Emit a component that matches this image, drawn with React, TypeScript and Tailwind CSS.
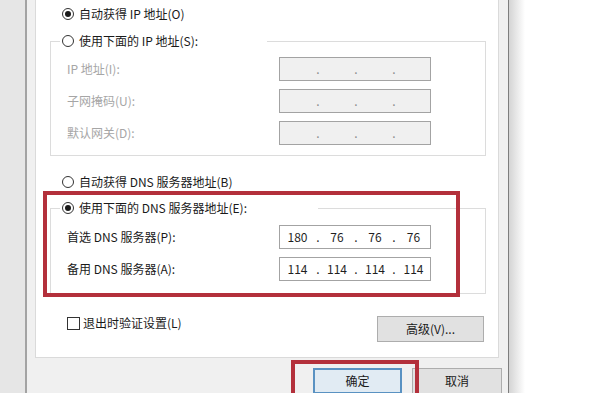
import React from "react";

const FONT = { fontFamily: '"Noto Sans CJK SC", "Noto Sans", sans-serif' };

function Radio({ checked }: { checked?: boolean }) {
  return (
    <span className="w-[12px] h-[12px] rounded-full border border-[#333333] bg-white flex items-center justify-center shrink-0">
      {checked ? <span className="w-[6px] h-[6px] rounded-full bg-[#1a1a1a]" /> : null}
    </span>
  );
}

function IpField({ values, disabled }: { values?: string[]; disabled?: boolean }) {
  const v = values ?? ["", "", "", ""];
  const box = disabled
    ? "bg-[#f0f0f0] border-[#a3a3a3]"
    : "bg-white border-[#a3a3a3]";
  const txt = disabled ? "text-[#8c8c8c]" : "text-[#1f1f1f]";
  return (
    <div className={`w-[152px] h-[24px] border ${box} flex items-center text-[12px] leading-none ${txt}`}>
      <span className="w-[35px] text-center">{v[0]}</span>
      <span className="w-[6px] text-center">.</span>
      <span className="w-[32px] text-center">{v[1]}</span>
      <span className="w-[6px] text-center">.</span>
      <span className="w-[32px] text-center">{v[2]}</span>
      <span className="w-[6px] text-center">.</span>
      <span className="w-[33px] text-center">{v[3]}</span>
    </div>
  );
}

function Row({ label, disabled, values }: { label: string; disabled?: boolean; values?: string[] }) {
  return (
    <div className="flex items-center h-[24px]">
      <span className={`w-[212px] text-[12px] ${disabled ? "text-[#a6a6a6]" : "text-[#1a1a1a]"}`}>{label}</span>
      <IpField disabled={disabled} values={values} />
    </div>
  );
}

export default function App() {
  return (
    <div className="relative w-[600px] h-[393px] overflow-hidden flex bg-white text-[#1a1a1a]" style={FONT}>
      <div className="w-[25px] shrink-0 bg-[#e6e6e6]" />
      <div className="w-[484px] shrink-0 h-full bg-[#f0f0f0] border-l-2 border-r border-l-[#a3a3a3] border-r-[#7d7d7d] flex flex-col">
        <div className="ml-[8px] w-[464px] h-[358px] shrink-0 bg-white border-l border-r border-b border-[#dadada] pl-[14px]">
          <div className="w-[436px] flex flex-col">
            <div className="mt-[6px] h-[16px] ml-[12px] flex items-center gap-[5px] text-[12px]">
              <Radio checked />
              <span>自动获得 IP 地址(O)</span>
            </div>

            <fieldset className="mt-[11px] w-[436px] border border-[#dcdcdc]">
              <legend className="ml-[9px] w-[207px] h-[16px]">
                <div className="h-full flex items-center gap-[5px] pl-[2px] text-[12px]">
                  <Radio />
                  <span>使用下面的 IP 地址(S):</span>
                </div>
              </legend>
              <div className="pt-[8px] pb-[10px] pl-[16px] flex flex-col gap-[8px]">
                <Row label="IP 地址(I):" disabled />
                <Row label="子网掩码(U):" disabled />
                <Row label="默认网关(D):" disabled />
              </div>
            </fieldset>

            <div className="mt-[18px] h-[16px] ml-[12px] flex items-center gap-[5px] text-[12px]">
              <Radio />
              <span>自动获得 DNS 服务器地址(B)</span>
            </div>

            <fieldset className="mt-[10px] w-[436px] border border-[#dcdcdc]">
              <legend className="ml-[9px] w-[258px] h-[16px]">
                <div className="h-full flex items-center gap-[5px] pl-[2px] text-[12px]">
                  <Radio checked />
                  <span>使用下面的 DNS 服务器地址(E):</span>
                </div>
              </legend>
              <div className="pt-[9px] pb-[12px] pl-[16px] flex flex-col gap-[8px]">
                <Row label="首选 DNS 服务器(P):" values={["180", "76", "76", "76"]} />
                <Row label="备用 DNS 服务器(A):" values={["114", "114", "114", "114"]} />
              </div>
            </fieldset>

            <div className="mt-[21px] flex items-start justify-between">
              <div className="ml-[17px] h-[16px] flex items-center gap-[3px] text-[12px]">
                <span className="w-[13px] h-[13px] border border-[#333333] bg-white shrink-0" />
                <span>退出时验证设置(L)</span>
              </div>
              <div className="mt-[1px] mr-[2px] w-[107px] h-[26px] bg-[#e1e1e1] border border-[#adadad] flex items-center justify-center text-[12px]">
                高级(V)...
              </div>
            </div>
          </div>
        </div>

        <div className="mt-[10px] pr-[6px] flex justify-end gap-[10px]">
          <div className="w-[89px] h-[26px] bg-[#e1ebf3] border-2 border-[#5a92c2] flex items-center justify-center text-[12px]">
            确定
          </div>
          <div className="w-[90px] h-[26px] bg-[#e1e1e1] border border-[#adadad] flex items-center justify-center text-[12px]">
            取消
          </div>
        </div>
      </div>
      <div className="w-[16px] shrink-0 h-full bg-gradient-to-r from-[#d4d4d4] to-white" />
      <div className="flex-1 bg-white" />

      <div className="absolute left-[43px] top-[191px] w-[417px] h-[106px] border-4 border-[#b3303b] pointer-events-none" />
      <div className="absolute left-[291px] top-[360px] w-[128px] h-[60px] border-4 border-[#b3303b] pointer-events-none" />
    </div>
  );
}
